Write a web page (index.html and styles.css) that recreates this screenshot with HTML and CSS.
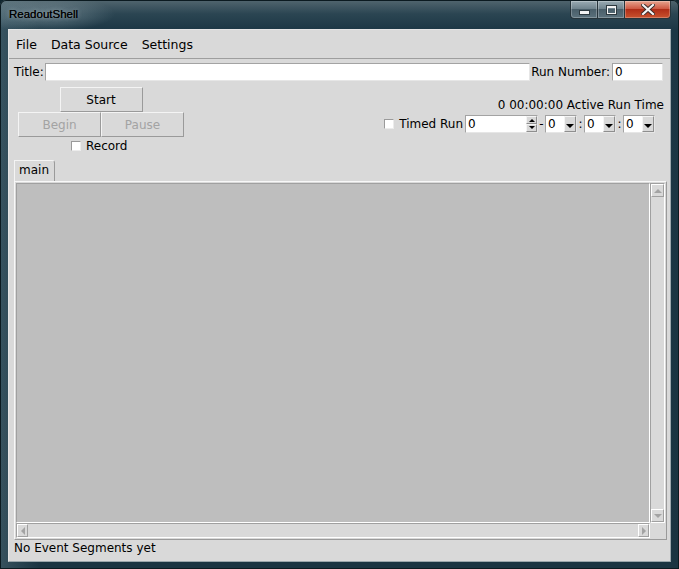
FILE: index.html
```html
<!DOCTYPE html>
<html lang="en">

<head>
    <meta charset="UTF-8">
    <title>ReadoutShell</title>
    <link rel="stylesheet" href="styles.css">
</head>

<body>
    <div class="window">
        <div class="titlebar">
            <span class="title">ReadoutShell</span>
            <div class="caption-buttons">
                <div class="cap-btn cap-min"><span class="min-icon"></span></div>
                <div class="cap-btn cap-max"><span class="max-icon"></span></div>
                <div class="cap-btn cap-close">
                    <svg width="14" height="11" viewBox="0 0 14 11">
                        <path d="M2 1 L12 10 M12 1 L2 10" stroke="#3a2a28" stroke-width="4" stroke-linecap="square" />
                        <path d="M2 1 L12 10 M12 1 L2 10" stroke="#f4f4f4" stroke-width="2.2" stroke-linecap="square" />
                    </svg>
                </div>
            </div>
        </div>

        <div class="client">
            <div class="menubar">
                <span class="menu-item">File</span>
                <span class="menu-item">Data Source</span>
                <span class="menu-item">Settings</span>
            </div>

            <div class="title-row">
                <span class="label">Title:</span>
                <div class="entry entry-title"></div>
                <span class="label">Run Number:</span>
                <div class="entry entry-run">0</div>
            </div>

            <div class="controls">
                <div class="run-buttons">
                    <button class="btn">Start</button>
                    <div class="btn-pair">
                        <button class="btn" disabled>Begin</button>
                        <button class="btn" disabled>Pause</button>
                    </div>
                    <label class="check-row"><span class="checkbox"></span>Record</label>
                </div>

                <div class="timing">
                    <div class="elapsed">0 00:00:00 Active Run Time</div>
                    <div class="timed-row">
                        <span class="checkbox"></span>
                        <span class="timed-label">Timed Run</span>
                        <div class="spin spin-days">
                            <span class="spin-value">0</span>
                            <div class="spin-arrows">
                                <span class="arr arr-up"></span>
                                <span class="arr arr-down"></span>
                            </div>
                        </div>
                        <span class="sep">-</span>
                        <div class="spin spin-small">
                            <span class="spin-value">0</span>
                            <span class="drop"></span>
                        </div>
                        <span class="sep">:</span>
                        <div class="spin spin-small">
                            <span class="spin-value">0</span>
                            <span class="drop"></span>
                        </div>
                        <span class="sep">:</span>
                        <div class="spin spin-small">
                            <span class="spin-value">0</span>
                            <span class="drop"></span>
                        </div>
                    </div>
                </div>
            </div>

            <div class="tabs">
                <div class="tab">main</div>
            </div>

            <div class="pane">
                <div class="canvas"></div>
                <div class="vscroll">
                    <span class="sb-btn"><span class="tri tri-up"></span></span>
                    <span class="sb-btn"><span class="tri tri-down"></span></span>
                </div>
                <div class="hscroll">
                    <span class="sb-btn"><span class="tri tri-left"></span></span>
                    <span class="sb-btn"><span class="tri tri-right"></span></span>
                </div>
                <div class="corner"></div>
            </div>

            <div class="status">No Event Segments yet</div>
        </div>
    </div>
</body>

</html>
```

FILE: styles.css
```css
body {
    margin: 0;
    background-color: #10262f;
    font-family: "DejaVu Sans", sans-serif;
    font-size: 12px;
    color: #000;
    overflow: hidden;
}

.window {
    width: 679px;
    height: 569px;
    box-sizing: border-box;
    padding: 0 8px 7px;
    display: flex;
    flex-direction: column;
    border-radius: 6px 6px 0 0;
    background: radial-gradient(ellipse 70px 18px at 45px 14px, rgba(150, 170, 178, 0.55), rgba(0, 0, 0, 0)),
        linear-gradient(90deg, rgba(120, 150, 160, 0.3) 0, rgba(0, 0, 0, 0) 40px),
        linear-gradient(180deg, #52666f 0, #2b4552 14px, #1c3745 30px, #1a3441 100%);
    box-shadow: inset 0 0 0 1px #0b1a20;
}

/* title bar */
.titlebar {
    height: 29px;
    display: flex;
    align-items: flex-start;
    justify-content: space-between;
}

.title {
    font-family: "Liberation Sans", sans-serif;
    font-size: 11.5px;
    margin: 8px 0 0 1px;
    color: #000;
    text-shadow: 0 0 4px rgba(220, 230, 232, 0.5), 0 0 0.4px #000;
}

.caption-buttons {
    display: flex;
    margin-top: 1px;
}

.cap-btn {
    height: 18px;
    box-sizing: border-box;
    border: 1px solid #26343b;
    border-top: none;
    display: flex;
    align-items: center;
    justify-content: center;
    box-shadow: inset 0 0 0 1px rgba(255, 255, 255, 0.25);
}

.cap-min {
    width: 27px;
    border-radius: 0 0 0 4px;
    border-right: none;
    background: linear-gradient(#9aabb3, #70848e 45%, #4a5f6a 50%, #5b717c);
}

.cap-max {
    width: 27px;
    border-right: none;
    background: linear-gradient(#9aabb3, #70848e 45%, #4a5f6a 50%, #5b717c);
}

.cap-close {
    width: 47px;
    border-radius: 0 0 4px 0;
    background: linear-gradient(#e7a48f, #cf5a44 45%, #b02e18 50%, #c8522e);
}

.min-icon {
    width: 9px;
    height: 3px;
    margin-top: 6px;
    background: #f2f2f2;
    border: 1px solid #2e3a40;
}

.max-icon {
    width: 7px;
    height: 5px;
    border: 1px solid #f2f2f2;
    border-top-width: 2px;
    outline: 1px solid #2e3a40;
}

/* client area */
.client {
    flex: 1;
    display: flex;
    flex-direction: column;
    background-color: #d9d9d9;
    border: 1px solid #9aa6ab;
    border-top-color: #e4e4e4;
    border-left-color: #e4e4e4;
}

.menubar {
    height: 28px;
    display: flex;
    align-items: center;
    border-bottom: 1px solid #9e9e9e;
    font-size: 12.5px;
}

.menu-item {
    padding: 0 7px;
}

.title-row {
    height: 18px;
    margin-top: 4px;
    padding: 0 7px 0 5px;
    display: flex;
    align-items: center;
}

.label {
    white-space: nowrap;
}

.entry {
    height: 18px;
    box-sizing: border-box;
    background-color: #fff;
    border: 1px solid #e6e6e6;
    border-top-color: #a3a3a3;
    border-left-color: #a3a3a3;
    padding-left: 2px;
    line-height: 16px;
}

.entry-title {
    flex: 1;
    margin: 0 1px 0 1px;
}

.entry-run {
    width: 51px;
    margin-left: 2px;
}

/* run controls */
.controls {
    margin-top: 6px;
    padding: 0 6px 0 9px;
    display: flex;
    justify-content: space-between;
    align-items: flex-start;
}

.run-buttons {
    width: 166px;
    display: flex;
    flex-direction: column;
    align-items: center;
}

.btn-pair {
    display: flex;
}

.btn {
    width: 83px;
    height: 25px;
    margin: 0;
    padding: 0;
    font-family: inherit;
    font-size: 12px;
    color: #000;
    background-color: #d9d9d9;
    border: 1px solid #9a9a9a;
    border-top-color: #f4f4f4;
    border-left-color: #f4f4f4;
}

.btn:disabled {
    color: #a3a3a3;
}

.check-row {
    height: 14px;
    margin: 2px 0 0 53px;
    align-self: flex-start;
    display: flex;
    align-items: center;
    gap: 5px;
}

.checkbox {
    width: 10px;
    height: 10px;
    box-sizing: border-box;
    background-color: #fff;
    border: 1px solid #9a9a9a;
    border-right-color: #ececec;
    border-bottom-color: #ececec;
}

.timing {
    margin-top: 11px;
    display: flex;
    flex-direction: column;
    align-items: flex-end;
}

.elapsed {
    height: 14px;
    line-height: 14px;
}

.timed-row {
    height: 18px;
    margin: 3px 9px 0 0;
    display: flex;
    align-items: center;
}

.timed-label {
    margin: 0 2px 0 5px;
}

.spin {
    height: 18px;
    box-sizing: border-box;
    display: flex;
    background-color: #fff;
    border: 1px solid #e6e6e6;
    border-top-color: #a3a3a3;
    border-left-color: #a3a3a3;
}

.spin-days {
    width: 73px;
}

.spin-small {
    width: 32px;
}

.spin-value {
    flex: 1;
    padding-left: 2px;
    line-height: 16px;
}

.spin-arrows {
    width: 11px;
    display: flex;
    flex-direction: column;
}

.arr {
    flex: 1;
    box-sizing: border-box;
    background-color: #d9d9d9;
    border: 1px solid #8e8e8e;
    border-top-color: #f4f4f4;
    border-left-color: #f4f4f4;
    position: relative;
}

.arr::after {
    content: "";
    position: absolute;
    left: 2px;
    top: 2px;
    border-left: 3px solid transparent;
    border-right: 3px solid transparent;
}

.arr-up::after {
    border-bottom: 3px solid #000;
}

.arr-down::after {
    top: 1px;
    border-top: 3px solid #000;
}

.drop {
    width: 12px;
    box-sizing: border-box;
    background-color: #d9d9d9;
    border: 1px solid #8e8e8e;
    border-top-color: #f4f4f4;
    border-left-color: #f4f4f4;
    position: relative;
}

.drop::after {
    content: "";
    position: absolute;
    left: 1px;
    bottom: 3px;
    border-left: 4px solid transparent;
    border-right: 4px solid transparent;
    border-top: 4px solid #000;
}

.sep {
    width: 7px;
    text-align: center;
}

/* notebook */
.tabs {
    margin-top: 7px;
    padding-left: 5px;
    display: flex;
}

.tab {
    width: 41px;
    height: 21px;
    box-sizing: border-box;
    padding-left: 4px;
    line-height: 19px;
    border: 1px solid #f4f4f4;
    border-right-color: #9a9a9a;
    border-bottom: none;
    border-radius: 0 3px 0 0;
}

.pane {
    flex: 1;
    margin: 0 3px 0 5px;
    padding: 1px;
    display: grid;
    grid-template-columns: 1fr 15px;
    grid-template-rows: 1fr 15px;
    border: 1px solid #9a9a9a;
    border-top-color: #f8f8f8;
    border-left-color: #f8f8f8;
}

.canvas {
    background-color: #bebebe;
    border: 1px solid #fff;
    border-top-color: #a0a0a0;
    border-left-color: #a0a0a0;
}

.vscroll,
.hscroll {
    display: flex;
    justify-content: space-between;
    background-color: #d9d9d9;
    border: 1px solid #fff;
    border-top-color: #a0a0a0;
    border-left-color: #a0a0a0;
}

.vscroll {
    flex-direction: column;
}

.sb-btn {
    width: 13px;
    height: 13px;
    box-sizing: border-box;
    display: flex;
    align-items: center;
    justify-content: center;
    border: 1px solid #a0a0a0;
    border-top-color: #fff;
    border-left-color: #fff;
}

.hscroll .sb-btn {
    height: 13px;
    width: 11px;
}

.tri {
    width: 0;
    height: 0;
}

.tri-up {
    border-left: 4px solid transparent;
    border-right: 4px solid transparent;
    border-bottom: 4px solid #a3a3a3;
}

.tri-down {
    border-left: 4px solid transparent;
    border-right: 4px solid transparent;
    border-top: 4px solid #a3a3a3;
}

.tri-left {
    border-top: 4px solid transparent;
    border-bottom: 4px solid transparent;
    border-right: 4px solid #a3a3a3;
}

.tri-right {
    border-top: 4px solid transparent;
    border-bottom: 4px solid transparent;
    border-left: 4px solid #a3a3a3;
}

.corner {
    background-color: #d9d9d9;
}

.status {
    height: 15px;
    line-height: 15px;
    margin: 1px 0 5px;
    padding-left: 5px;
}
```
